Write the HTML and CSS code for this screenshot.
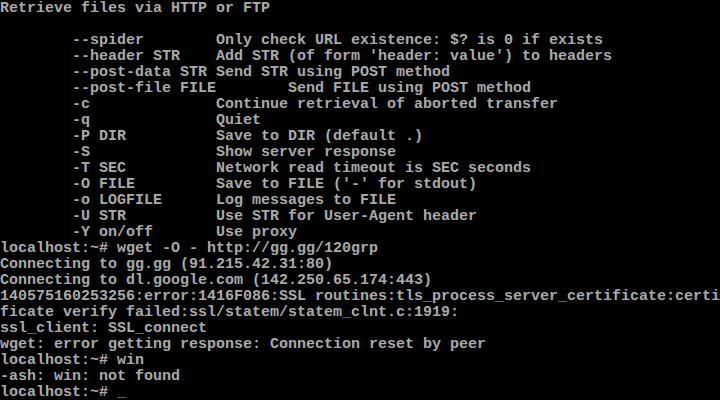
FILE: index.html
```html
<!DOCTYPE html>
<html>
<head>
<meta charset="utf-8">
<link rel="stylesheet" href="styles.css">
</head>
<body>
<pre class="screen">Retrieve files via HTTP or FTP

        --spider        Only check URL existence: $? is 0 if exists
        --header STR    Add STR (of form 'header: value') to headers
        --post-data STR Send STR using POST method
        --post-file FILE        Send FILE using POST method
        -c              Continue retrieval of aborted transfer
        -q              Quiet
        -P DIR          Save to DIR (default .)
        -S              Show server response
        -T SEC          Network read timeout is SEC seconds
        -O FILE         Save to FILE ('-' for stdout)
        -o LOGFILE      Log messages to FILE
        -U STR          Use STR for User-Agent header
        -Y on/off       Use proxy
localhost:~# wget -O - http://gg.gg/120grp
Connecting to gg.gg (91.215.42.31:80)
Connecting to dl.google.com (142.250.65.174:443)
140575160253256:error:1416F086:SSL routines:tls_process_server_certificate:certi
ficate verify failed:ssl/statem/statem_clnt.c:1919:
ssl_client: SSL_connect
wget: error getting response: Connection reset by peer
localhost:~# win
-ash: win: not found
localhost:~# _</pre>
</body>
</html>
```
FILE: styles.css
```css
html, body {
  margin: 0;
  padding: 0;
  background: #000;
  width: 720px;
  height: 400px;
  overflow: hidden;
}
.screen {
  margin: 0;
  padding: 1px 0 0 0;
  font-family: "Liberation Mono", "DejaVu Sans Mono", monospace;
  font-size: 15px;
  line-height: 16px;
  font-weight: bold;
  color: #aaaaaa;
  white-space: pre;
}
```
